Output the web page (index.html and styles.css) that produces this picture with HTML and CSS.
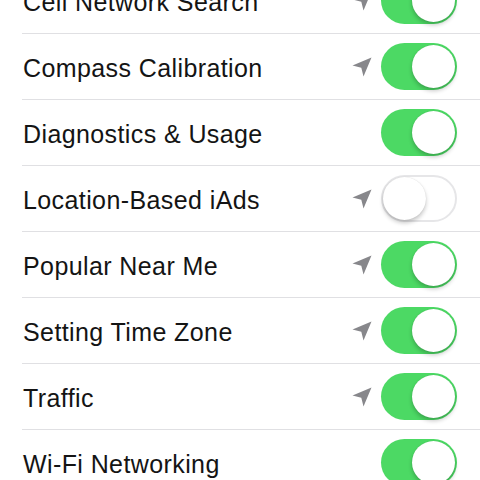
FILE: index.html
```html
<!DOCTYPE html>
<html>
<head>
<meta charset="utf-8">
<link rel="stylesheet" href="styles.css">
</head>
<body>
<ul class="list">
  <li class="row"><div class="inner"><span class="label">Cell Network Search</span><svg class="arrow" viewBox="0 0 20 20"><path d="M19.5 0.5 L0.5 8.5 L9.3 10.7 L11.5 19.5 Z"/></svg><span class="toggle on"><span class="knob"></span></span></div></li>
  <li class="row"><div class="inner"><span class="label">Compass Calibration</span><svg class="arrow" viewBox="0 0 20 20"><path d="M19.5 0.5 L0.5 8.5 L9.3 10.7 L11.5 19.5 Z"/></svg><span class="toggle on"><span class="knob"></span></span></div></li>
  <li class="row"><div class="inner"><span class="label">Diagnostics &amp; Usage</span><span class="toggle on"><span class="knob"></span></span></div></li>
  <li class="row"><div class="inner"><span class="label">Location-Based iAds</span><svg class="arrow" viewBox="0 0 20 20"><path d="M19.5 0.5 L0.5 8.5 L9.3 10.7 L11.5 19.5 Z"/></svg><span class="toggle off"><span class="knob"></span></span></div></li>
  <li class="row"><div class="inner"><span class="label">Popular Near Me</span><svg class="arrow" viewBox="0 0 20 20"><path d="M19.5 0.5 L0.5 8.5 L9.3 10.7 L11.5 19.5 Z"/></svg><span class="toggle on"><span class="knob"></span></span></div></li>
  <li class="row"><div class="inner"><span class="label">Setting Time Zone</span><svg class="arrow" viewBox="0 0 20 20"><path d="M19.5 0.5 L0.5 8.5 L9.3 10.7 L11.5 19.5 Z"/></svg><span class="toggle on"><span class="knob"></span></span></div></li>
  <li class="row"><div class="inner"><span class="label">Traffic</span><svg class="arrow" viewBox="0 0 20 20"><path d="M19.5 0.5 L0.5 8.5 L9.3 10.7 L11.5 19.5 Z"/></svg><span class="toggle on"><span class="knob"></span></span></div></li>
  <li class="row"><div class="inner"><span class="label">Wi-Fi Networking</span><span class="toggle on"><span class="knob"></span></span></div></li>
</ul>
</body>
</html>
```
FILE: styles.css
```css
html, body {
  margin: 0;
  padding: 0;
  background: #fff;
  overflow: hidden;
}
.list {
  list-style: none;
  margin: -32px 0 0 0;
  padding: 0;
  font-family: "Liberation Sans", Arial, sans-serif;
}
.row {
  padding-left: 22px;
}
.inner {
  display: flex;
  align-items: center;
  height: 65px;
  border-bottom: 1px solid #e0e0e3;
  padding-right: 23px;
}
.label {
  flex: 1;
  font-size: 25px;
  letter-spacing: 0.4px;
  color: #141414;
  padding-top: 3px;
  padding-left: 1px;
}
.arrow {
  width: 20px;
  height: 20px;
  fill: #87878b;
  margin-right: 9px;
  margin-top: 1px;
}
.toggle {
  position: relative;
  box-sizing: border-box;
  width: 76px;
  height: 47px;
  border-radius: 24px;
}
.toggle.on {
  background: #4cd964;
}
.toggle.off {
  background: #fff;
  border: 2px solid #e6e6e8;
}
.knob {
  position: absolute;
  top: 2px;
  width: 43px;
  height: 43px;
  border-radius: 50%;
  background: #fff;
  box-shadow: 0 3px 4px rgba(0,0,0,0.22), 0 0 1px rgba(0,0,0,0.15);
}
.toggle.on .knob {
  right: 2px;
}
.toggle.off .knob {
  top: 0;
  left: 0;
}
```
